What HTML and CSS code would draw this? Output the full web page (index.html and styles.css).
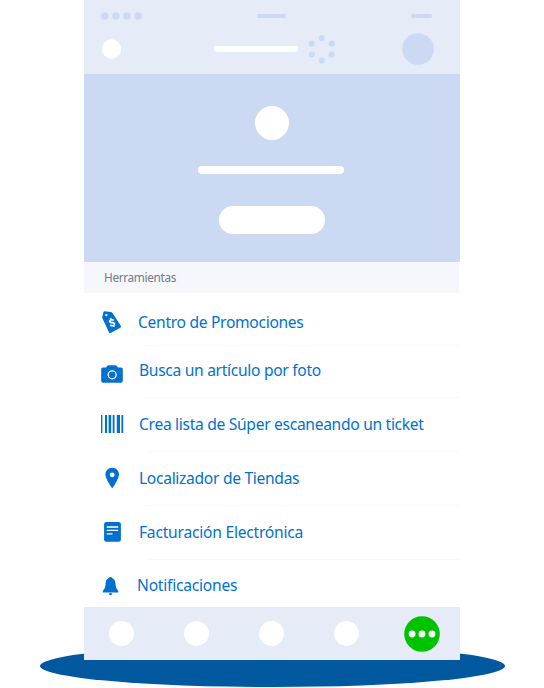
FILE: index.html
```html
<!DOCTYPE html>
<html lang="es">
<head>
<meta charset="utf-8">
<title>Herramientas</title>
<link rel="stylesheet" href="styles.css">
</head>
<body>
<div class="shadow"></div>
<main class="phone">
  <header class="header">
    <div class="status">
      <svg class="signal" viewBox="0 0 42 8"><circle cx="3.8" cy="4" r="3.7"/><circle cx="14.9" cy="4" r="3.7"/><circle cx="25.9" cy="4" r="3.7"/><circle cx="37" cy="4" r="3.7"/></svg>
      <div class="clock"></div>
      <div class="battery"></div>
    </div>
    <div class="toolbar">
      <svg class="back" viewBox="0 0 20 20"><circle cx="9.5" cy="10" r="9.7"/></svg>
      <div class="search"></div>
      <svg class="spark" viewBox="0 0 28 30"><circle cx="13.7" cy="4" r="3"/><circle cx="23.6" cy="9.8" r="3"/><circle cx="23.6" cy="20.5" r="3"/><circle cx="13.7" cy="26.4" r="3"/><circle cx="3.8" cy="20.5" r="3"/><circle cx="3.8" cy="9.8" r="3"/></svg>
      <svg class="cart" viewBox="0 0 32 32"><circle cx="16" cy="16" r="15.8"/></svg>
    </div>
  </header>
  <section class="hero">
    <div class="avatar"></div>
    <div class="name"></div>
    <div class="button"></div>
  </section>
  <h2 class="heading"><span>Herramientas</span></h2>
  <ul class="list">
    <li class="row promo">
      <svg class="icon" viewBox="0 0 24 24"><path d="M3.4 2.2Q3.7 1.3 4.6 1.3L10.6 1.9Q11.8 2 12.5 3L20.8 15.8Q21.4 17 20.4 17.7L10.6 23Q9.4 23.5 8.9 22.3L2.4 8.3Q2.1 7.5 2.3 6.6Z"/><circle class="cut" cx="6.3" cy="5.1" r="1.2"/><path class="line" d="M13.9 10.4Q11.5 9 10 10.3Q8.7 12.2 11.6 12.6Q15.2 12.4 14.4 14.7Q12.8 16.7 10.2 15M10.6 8.2L11.2 9.5M13.4 15.6L14.1 17"/></svg>
      <span>Centro de Promociones</span>
    </li>
    <li class="row photo">
      <svg class="icon" viewBox="0 0 24 24"><path d="M3 5.4H6L7.5 3.7Q7.9 3.2 8.7 3.2H15.3Q16.1 3.2 16.5 3.7L18 5.4H21Q22.8 5.4 22.8 7.2V19Q22.8 20.8 21 20.8H3Q1.2 20.8 1.2 19V7.2Q1.2 5.4 3 5.4Z"/><circle class="line thin" cx="12.2" cy="12.8" r="4"/></svg>
      <span>Busca un artículo por foto</span>
    </li>
    <li class="row scan">
      <svg class="icon" viewBox="0 0 24 24"><path d="M1 3h1.4v18H1zM5 3h2v18H5zM8.6 3h2.6v18H8.6zM12.7 3h1.8v18h-1.8zM16.8 3h3.2v18h-3.2zM21.4 3h1.8v18h-1.8z"/></svg>
      <span>Crea lista de Súper escaneando un ticket</span>
    </li>
    <li class="row stores">
      <svg class="icon" viewBox="0 0 24 24"><path d="M12.2 1.8C8.3 1.8 5.4 4.7 5.4 8.5C5.4 13.1 12.2 22.3 12.2 22.3S19 13.1 19 8.5C19 4.7 16.1 1.8 12.2 1.8Z"/><circle class="cut" cx="12.2" cy="8.8" r="2.4"/></svg>
      <span>Localizador de Tiendas</span>
    </li>
    <li class="row invoice">
      <svg class="icon" viewBox="0 0 24 24"><rect x="4.1" y="2" width="16.8" height="19.8" rx="2.2"/><path class="pale" d="M6.7 6h11.5v2H6.7z"/><path class="cut" d="M6.7 9.8h11.5v1.2H6.7zM6.7 13.2h5.8v1.2H6.7z"/></svg>
      <span>Facturación Electrónica</span>
    </li>
    <li class="row alerts">
      <svg class="icon" viewBox="0 0 24 24"><path d="M8.8 3Q9 2.9 9 2.4Q9.2 2 10.5 2Q11.8 2 12 2.4V3C14.6 4 15.4 6.1 15.5 8.6C15.6 12.2 16.3 13.8 18.3 16V17.4H2.8V16C4.8 13.8 5.5 12.2 5.6 8.6C5.7 6.1 6.4 4 8.8 3ZM8.8 18.3H12.3Q12 20.1 10.5 20.2Q9 20.1 8.8 18.3Z"/></svg>
      <span>Notificaciones</span>
    </li>
  </ul>
  <nav class="tabs">
    <div class="tab"></div><div class="tab"></div><div class="tab"></div><div class="tab"></div>
    <svg class="more" viewBox="0 0 36 36"><circle cx="18" cy="18" r="17.8"/><circle class="dot" cx="8.1" cy="18" r="3.4"/><circle class="dot" cx="18" cy="18" r="3.4"/><circle class="dot" cx="28" cy="18" r="3.4"/></svg>
  </nav>
</main>
</body>
</html>
```
FILE: styles.css
```css
* { box-sizing: border-box; }
body { position: relative; margin: 0; width: 544px; height: 688px; overflow: hidden; background: #fff; font-family: "Noto Sans", sans-serif; }
.shadow { position: absolute; left: 39.5px; top: 645px; width: 465px; height: 42px; border-radius: 50%; background: #00589f; }
.phone { position: relative; width: 376px; height: 660px; margin-left: 84px; background: #fff; display: flex; flex-direction: column; }
.header { height: 74px; background: #e5ebf7; padding-top: 12px; }
.status { display: flex; align-items: center; height: 8px; padding-left: 17px; }
.signal { width: 42px; height: 8px; margin-right: 114px; fill: #cbd9f2; }
.clock { width: 29px; height: 4px; border-radius: 2px; background: #cbd9f2; }
.battery { width: 21px; height: 4px; margin-left: 125px; border-radius: 2px; background: #cbd9f2; }
.toolbar { display: flex; align-items: center; height: 32px; margin-top: 13px; padding-left: 18px; }
.back { width: 20px; height: 20px; overflow: visible; fill: #fff; }
.search { width: 84px; height: 6px; margin-left: 92px; border-radius: 3px; background: #fff; }
.spark { width: 28px; height: 30px; margin-left: 10px; fill: #cbd9f2; }
.cart { width: 32px; height: 32px; margin-left: 66px; fill: #cbd9f2; }
.hero { height: 187.5px; padding-top: 32px; background: #cbd9f2; display: flex; flex-direction: column; align-items: center; }
.avatar { width: 34px; height: 34px; border-radius: 50%; background: #fff; }
.name { width: 146px; height: 8.4px; margin: 25.9px 2px 0 0; border-radius: 5px; background: #fff; }
.button { width: 105.6px; height: 28.5px; margin-top: 31.6px; border-radius: 15px; background: #fff; }
.heading { height: 31.5px; margin: 0 1px 0 0; padding-left: 20px; background: #f5f7fc; color: #737b84; font-size: 11.8px; font-weight: 400; line-height: 30px; letter-spacing: -.33px; }
.list { height: 314px; margin: 0; padding: 0; list-style: none; }
.row { position: relative; display: flex; align-items: center; height: 54px; padding: 0 0 2px 16px; color: #0071ce; font-size: 15.6px; line-height: 24px; letter-spacing: -.3px; white-space: nowrap; }
.row:not(:last-child)::after { content: ""; position: absolute; left: 62px; right: 1px; bottom: 0; height: 1px; background: #f8f8f9; }
.icon { flex: none; width: 24px; height: 24px; margin-right: 15px; fill: currentColor; }
.icon .cut { fill: #fff; }
.icon .pale { fill: #c8def3; }
.icon .line { fill: none; stroke: #fff; stroke-width: 1.6; }
.icon .thin { stroke-width: 1.3; }
.promo { height: 53px; padding-top: 5px; padding-bottom: 0; }
.promo .icon { margin-right: 14px; }
.photo { height: 52px; padding-bottom: 0; }
.photo .icon { margin-top: 4px; }
.photo span { margin-top: -4px; }
.invoice { letter-spacing: -.22px; }
.alerts { height: 47px; padding-top: 4px; letter-spacing: -.22px; }
.alerts .icon { margin-top: 4px; margin-right: 13px; }
.tabs { position: relative; display: flex; align-items: center; height: 53px; padding: 0 20px 0 24.5px; justify-content: space-between; background: #e5ebf7; }
.tabs::before { content: ""; position: absolute; left: 62px; right: 1px; top: 9px; height: 1px; background: #e9eaf4; }
.tab { position: relative; width: 25.6px; height: 25.6px; border-radius: 50%; background: #fff; }
.more { position: relative; width: 36px; height: 36px; margin-left: -5px; fill: #00c300; }
.more .dot { fill: #fff; }
```
